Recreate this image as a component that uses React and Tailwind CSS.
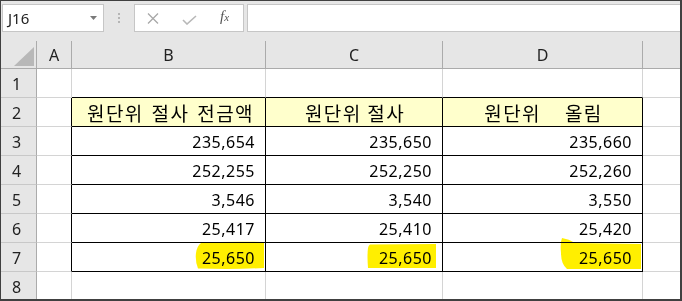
import React from "react";

const rowsData = [
  ["235,654", "235,650", "235,660"],
  ["252,255", "252,250", "252,260"],
  ["3,546", "3,540", "3,550"],
  ["25,417", "25,410", "25,420"],
  ["25,650", "25,650", "25,650"],
];

const NUM = "font-['Noto_Sans',sans-serif] text-[16px] tracking-[0.5px] text-black";
const HAN = "font-['Noto_Sans_CJK_KR',sans-serif] text-[19px] tracking-[1.4px] text-black leading-none";
const HDR = "font-['Noto_Sans',sans-serif] text-[16px] text-[#222]";

function Highlight({ which }) {
  if (which === 0)
    return (
      <svg className="absolute left-[123px] top-[-2px] mix-blend-multiply" width="70" height="29" viewBox="0 0 70 29">
        <path d="M6 2 Q 30 0 69 1 L 69 27 Q 40 28.5 3 27.5 Q 0 20 1 12 Q 2 5 6 2 Z" fill="#ffef00" />
      </svg>
    );
  if (which === 1)
    return (
      <svg className="absolute left-[101px] top-[1px] mix-blend-multiply" width="70" height="25" viewBox="0 0 70 25">
        <path d="M3 0.5 L 69 0 L 69 24 L 1 24 Q 0 12 1 4 Q 1.5 1 3 0.5 Z" fill="#ffef00" />
      </svg>
    );
  return (
    <svg className="absolute left-[117px] top-[-5px] mix-blend-multiply" width="82" height="32" viewBox="0 0 82 32">
      <path d="M2 0 Q 9 1 15 5 L 81 6 L 81 31 L 7 31 Q 1 26 1 15 Q 0 5 2 0 Z" fill="#ffef00" />
    </svg>
  );
}

export default function App() {
  return (
    <div className="w-[682px] h-[301px] box-border border-t border-l border-r-2 border-b-2 border-[#404040] bg-[#e6e6e6] overflow-hidden">
      {/* formula bar */}
      <div className="h-[31px] flex items-start pt-[3px]">
        <div className="ml-[1px] w-[102px] h-[28px] bg-white border border-[#c6c6c6] flex items-center justify-between pl-[5px] pr-[6px]">
          <span className="font-['Noto_Sans',sans-serif] text-[15px] text-[#222] leading-none">J16</span>
          <svg width="7" height="4" viewBox="0 0 7 4">
            <path d="M0 0 L7 0 L3.5 4 Z" fill="#7a7a7a" />
          </svg>
        </div>
        <div className="w-[30px] h-[28px] flex flex-col items-center justify-center gap-[2px]">
          <div className="w-[2px] h-[2px] bg-[#b5b5b5]" />
          <div className="w-[2px] h-[2px] bg-[#b5b5b5]" />
          <div className="w-[2px] h-[2px] bg-[#b5b5b5]" />
        </div>
        <div className="w-[110px] h-[28px] bg-white border border-[#c6c6c6] relative">
          <svg className="absolute left-[12px] top-[8px]" width="12" height="11" viewBox="0 0 12 11">
            <path d="M1 0.5 L11 10.5 M11 0.5 L1 10.5" stroke="#a8a8a8" strokeWidth="1.3" fill="none" />
          </svg>
          <svg className="absolute left-[47px] top-[10px]" width="15" height="10" viewBox="0 0 15 10">
            <path d="M1 5 L5 9 L14 1" stroke="#b8b8b8" strokeWidth="1.6" fill="none" />
          </svg>
          <span className="absolute left-[85px] top-[4px] font-['Liberation_Serif',serif] italic text-[15px] text-[#555] leading-none">
            f<span className="text-[11px]">x</span>
          </span>
        </div>
        <div className="ml-[3px] flex-1 h-[28px] bg-white border-t border-b border-l border-[#c6c6c6]" />
      </div>

      {/* grid */}
      <div className="mt-[9px] grid grid-cols-[36px_35px_194px_177px_200px_1fr] grid-rows-[28px_repeat(8,29px)]">
        {/* header row */}
        <div className="relative border-r border-b border-[#ababab] bg-[#e6e6e6]">
          <svg className="absolute left-[13px] top-[6px]" width="20" height="19" viewBox="0 0 20 19">
            <path d="M20 0 L20 19 L0 19 Z" fill="#b8b8b8" />
          </svg>
        </div>
        {["A", "B", "C", "D", ""].map((c, i) => (
          <div key={i} className={`flex items-center justify-center pt-[1px] border-b border-[#ababab] ${i < 4 ? "border-r" : ""} ${HDR}`}>
            {c}
          </div>
        ))}

        {/* row 1 */}
        <div className={`flex items-center justify-center pr-[4px] pt-[2px] border-r border-[#ababab] border-b border-b-[#c8c8c8] ${HDR}`}>1</div>
        <div className="bg-white border-r border-b border-[#d4d4d4]" />
        <div className="bg-white border-r border-[#d4d4d4] border-b border-b-black" />
        <div className="bg-white border-r border-[#d4d4d4] border-b border-b-black" />
        <div className="bg-white border-r border-[#d4d4d4] border-b border-b-black" />
        <div className="bg-white border-b border-[#d4d4d4]" />

        {/* row 2 */}
        <div className={`flex items-center justify-center pr-[4px] pt-[2px] border-r border-[#ababab] border-b border-b-[#c8c8c8] ${HDR}`}>2</div>
        <div className="bg-white border-r border-r-black border-b border-b-[#d4d4d4]" />
        <div className={`bg-[#ffffcc] border-r border-b border-black flex items-center justify-between pl-[15px] pr-[11px] ${HAN}`}>
          <span>원단위</span>
          <span>절사</span>
          <span>전금액</span>
        </div>
        <div className={`bg-[#ffffcc] border-r border-b border-black flex items-center justify-center pl-[2px] ${HAN}`}>
          <span>원단위 절사</span>
        </div>
        <div className={`bg-[#ffffcc] border-r border-b border-black flex items-center justify-center gap-[24px] pl-[2px] ${HAN}`}>
          <span>원단위</span>
          <span>올림</span>
        </div>
        <div className="bg-white border-b border-[#d4d4d4]" />

        {/* rows 3-7 */}
        {rowsData.map((r, ri) => (
          <React.Fragment key={ri}>
            <div className={`flex items-center justify-center pr-[4px] pt-[2px] border-r border-[#ababab] border-b border-b-[#c8c8c8] ${HDR}`}>{ri + 3}</div>
            <div className="bg-white border-r border-r-black border-b border-b-[#d4d4d4]" />
            <div className={`relative bg-white border-r border-b border-black flex items-center justify-end pr-[10px] pt-[2px] ${NUM}`}>
              {ri === 4 && <Highlight which={0} />}
              <span className="relative">{r[0]}</span>
            </div>
            <div className={`relative bg-white border-r border-b border-black flex items-center justify-end pr-[10px] pt-[2px] ${NUM}`}>
              {ri === 4 && <Highlight which={1} />}
              <span className="relative">{r[1]}</span>
            </div>
            <div className={`relative bg-white border-r border-b border-black flex items-center justify-end pr-[10px] pt-[2px] ${NUM}`}>
              {ri === 4 && <Highlight which={2} />}
              <span className="relative">{r[2]}</span>
            </div>
            <div className="bg-white border-b border-[#d4d4d4]" />
          </React.Fragment>
        ))}

        {/* row 8 */}
        <div className={`flex items-center justify-center pr-[4px] pt-[2px] border-r border-[#ababab] border-b border-b-[#c8c8c8] ${HDR}`}>8</div>
        <div className="bg-white border-r border-b border-[#d4d4d4]" />
        <div className="bg-white border-r border-b border-[#d4d4d4]" />
        <div className="bg-white border-r border-b border-[#d4d4d4]" />
        <div className="bg-white border-r border-b border-[#d4d4d4]" />
        <div className="bg-white border-b border-[#d4d4d4]" />
      </div>
    </div>
  );
}
